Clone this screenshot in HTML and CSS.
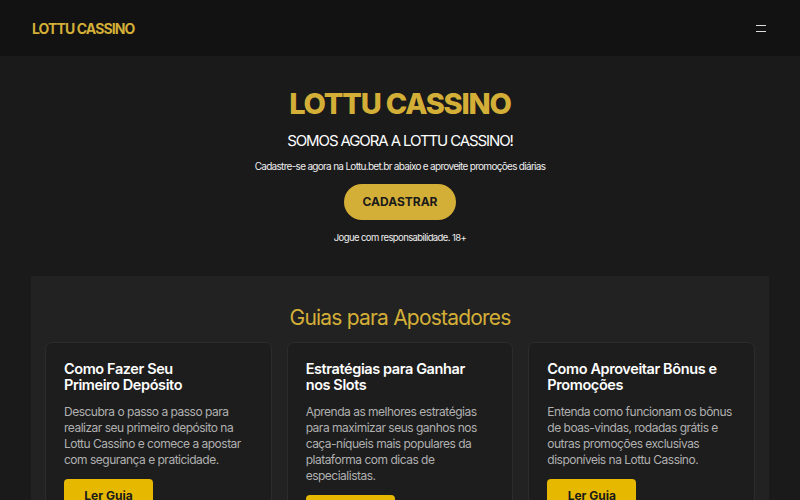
FILE: index.html
```html
<!DOCTYPE html>
<html lang="pt-BR">
<head>
    <meta charset="UTF-8">
    <meta name="viewport" content="width=device-width, initial-scale=1.0">
    <title>Lottu Cassino</title>
    <link rel="stylesheet" href="styles.css">
</head>
<body>

<header class="topbar">
    <a class="logo" href="#">LOTTU CASSINO</a>
    <button class="menu-btn" aria-label="Menu"><span></span><span></span></button>
</header>

<section class="hero">
    <h1>LOTTU CASSINO</h1>
    <h2>SOMOS AGORA A LOTTU CASSINO!</h2>
    <p class="lead">Cadastre-se agora na Lottu.bet.br abaixo e aproveite promoções diárias</p>
    <a class="cta" href="#">CADASTRAR</a>
    <p class="note">Jogue com responsabilidade. 18+</p>
</section>

<section class="guides">
    <h2>Guias para Apostadores</h2>
    <div class="cards">
        <div class="card">
            <h3>Como Fazer Seu<br>Primeiro Depósito</h3>
            <p>Descubra o passo a passo para realizar seu primeiro depósito na Lottu Cassino e comece a apostar com segurança e praticidade.</p>
            <a class="btn" href="#">Ler Guia</a>
        </div>
        <div class="card">
            <h3>Estratégias para Ganhar<br>nos Slots</h3>
            <p>Aprenda as melhores estratégias para maximizar seus ganhos nos caça-níqueis mais populares da plataforma com dicas de especialistas.</p>
            <a class="btn" href="#">Ler Guia</a>
        </div>
        <div class="card">
            <h3>Como Aproveitar Bônus e<br>Promoções</h3>
            <p>Entenda como funcionam os bônus de boas-vindas, rodadas grátis e outras promoções exclusivas disponíveis na Lottu Cassino.</p>
            <a class="btn" href="#">Ler Guia</a>
        </div>
    </div>
</section>

</body>
</html>
```

FILE: styles.css
```css
body { margin: 0; background: #1a1a1a; color: #fff; font-family: Inter, "Noto Sans", sans-serif; }
a { text-decoration: none; }

.topbar { height: 56px; background: #121212; display: flex; justify-content: space-between; align-items: center; padding: 0 32px; }
.logo { color: #d4af37; font-weight: 700; font-size: 14px; letter-spacing: -0.9px; }
.menu-btn { background: none; border: none; padding: 0; width: 10px; height: 7px; display: flex; flex-direction: column; justify-content: space-between; cursor: pointer; margin-right: 2px; }
.menu-btn span { display: block; height: 1px; background: #ddd; }

.hero { text-align: center; padding-top: 30px; }
.hero h1 { margin: 0; color: #d4af37; font-size: 29px; font-weight: 800; letter-spacing: -1.2px; line-height: 36px; }
.hero h2 { margin: 8px 0 0; font-size: 15px; font-weight: 400; line-height: 22px; letter-spacing: -1.1px; }
.lead { margin: 7px 0 0; font-size: 10px; line-height: 14px; color: #eee; letter-spacing: -0.7px; }
.cta { display: inline-block; margin-top: 11px; width: 112px; height: 36px; line-height: 36px; border-radius: 18px; background: #d4af37; color: #1a1a1a; font-weight: 700; font-size: 12px; }
.note { margin: 11px 0 0; font-size: 9.5px; line-height: 14px; color: #eee; letter-spacing: -0.6px; }

.guides { margin: 31px 31px 0; background: #222; padding: 28px 14px 20px; }
.guides h2 { margin: 0 0 10px; text-align: center; color: #d4af37; font-size: 21px; font-weight: 400; line-height: 28px; letter-spacing: -0.8px; }
.cards { display: grid; grid-template-columns: repeat(3, 1fr); gap: 15px; }
.card { background: #1d1d1d; border: 1px solid #2c2c2c; border-radius: 7px; padding: 18px 18px 20px; }
.card h3 { margin: 0; font-size: 14.5px; font-weight: 600; line-height: 16px; letter-spacing: -0.4px; }
.card p { margin: 11px 0 11px; font-size: 12px; line-height: 16px; color: #b0b0b0; letter-spacing: -0.5px; }
.btn { display: inline-block; width: 89px; height: 34px; line-height: 34px; text-align: center; border-radius: 4px; background: #e6b800; color: #1a1a1a; font-weight: 700; font-size: 12px; }
```
